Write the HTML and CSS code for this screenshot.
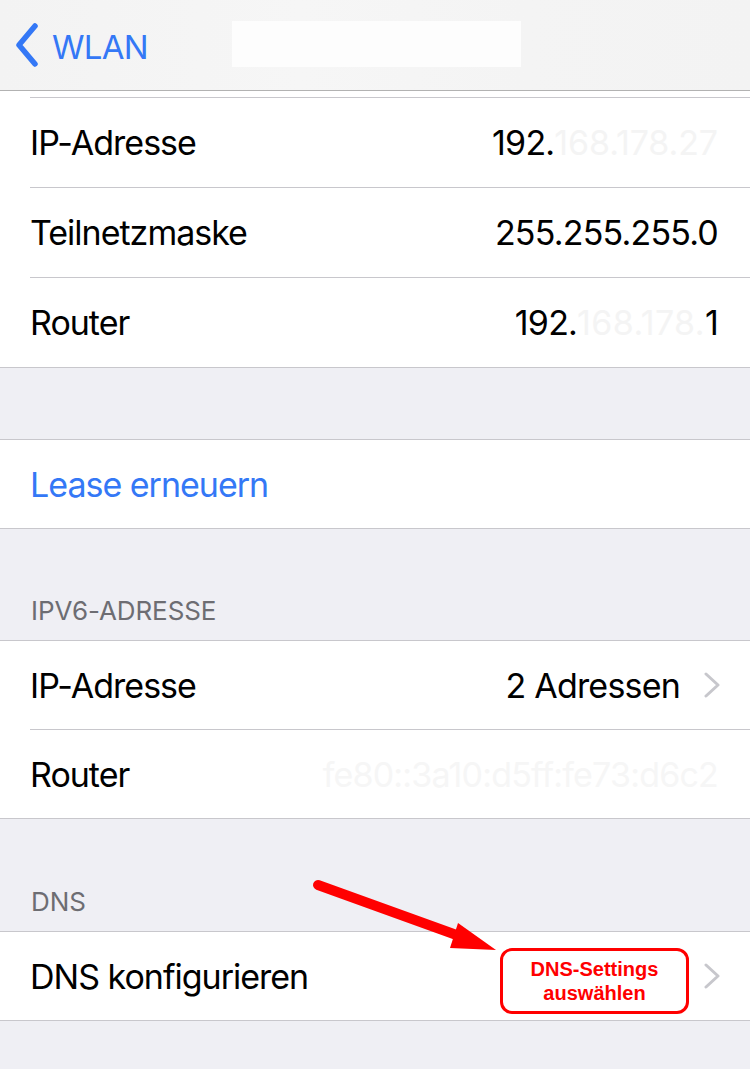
FILE: index.html
```html
<!DOCTYPE html>
<html lang="de">
<head>
<meta charset="utf-8">
<title>WLAN</title>
<link rel="stylesheet" href="styles.css">
</head>
<body>
<div class="screen">
  <header class="navbar">
    <a class="back" href="#">
      <svg class="back-chevron" width="30" height="44" viewBox="0 0 30 44">
        <path d="M25 7 L9 26 L25 45" transform="translate(0,-4)" fill="none" stroke="#3478f6" stroke-width="5.5" stroke-linecap="round" stroke-linejoin="round"/>
      </svg>
      <span>WLAN</span>
    </a>
    <div class="title-mask"></div>
  </header>

  <section class="group group-top">
    <div class="row"><div class="row-inner"><span class="label">IP-Adresse</span><span class="value">192.<span class="hidden hidden-ip">168.178.27</span></span></div></div>
    <div class="row"><div class="row-inner"><span class="label">Teilnetzmaske</span><span class="value">255.255.255.0</span></div></div>
    <div class="row"><div class="row-inner"><span class="label">Router</span><span class="value">192.<span class="hidden hidden-router">168.178.</span>1</span></div></div>
  </section>

  <div class="spacer"></div>

  <section class="group">
    <div class="row"><div class="row-inner"><span class="label link">Lease erneuern</span></div></div>
  </section>

  <div class="section-header">IPV6-ADRESSE</div>
  <section class="group">
    <div class="row"><div class="row-inner has-chevron"><span class="label">IP-Adresse</span><span class="value">2 Adressen</span>
      <svg class="chevron" width="16" height="26" viewBox="0 0 16 26"><path d="M2 2 L14 13 L2 24" fill="none" stroke="#c7c7cc" stroke-width="3" stroke-linecap="round" stroke-linejoin="round"/></svg></div></div>
    <div class="row"><div class="row-inner"><span class="label">Router</span><span class="value hidden">fe80::3a10:d5ff:fe73:d6c2</span></div></div>
  </section>

  <div class="section-header section-header-dns">DNS</div>
  <section class="group">
    <div class="row"><div class="row-inner has-chevron"><span class="label">DNS konfigurieren</span>
      <svg class="chevron" width="16" height="26" viewBox="0 0 16 26"><path d="M2 2 L14 13 L2 24" fill="none" stroke="#c7c7cc" stroke-width="3" stroke-linecap="round" stroke-linejoin="round"/></svg></div></div>
  </section>

  <!-- red callout pointing at the DNS row -->
  <svg class="callout-arrow" width="750" height="1069" viewBox="0 0 750 1069">
    <line x1="318" y1="885" x2="462" y2="937" stroke="#ff0000" stroke-width="10" stroke-linecap="round"/>
    <polygon points="458,923 496,950 450,948" fill="#ff0000"/>
  </svg>
  <div class="callout-box">DNS-Settings<br>auswählen</div>
</div>
</body>
</html>
```

FILE: styles.css
```css
html, body {
  margin: 0;
  padding: 0;
}

body {
  background: #efeff4;
  font-family: "Inter", "Roboto", sans-serif;
  color: #000;
}

.screen {
  position: relative;
  width: 750px;
  height: 1069px;
  overflow: hidden;
  background: #efeff4;
}

/* navigation bar */
.navbar {
  height: 90px;
  border-bottom: 1px solid #b2b2b2;
  background: linear-gradient(90deg, #f3f3f3 0%, #f6f6f6 40%, #f4f4f4 70%, #f3f3f3 100%);
  display: flex;
  align-items: center;
  padding-left: 10px;
  box-sizing: content-box;
}

.back {
  display: flex;
  align-items: center;
  gap: 12px;
  color: #3478f6;
  text-decoration: none;
  font-size: 33px;
  letter-spacing: -0.7px;
  padding-top: 4px;
}

.back-chevron {
  display: block;
  margin-top: -4px;
}

.title-mask {
  position: absolute;
  left: 232px;
  top: 21px;
  width: 289px;
  height: 46px;
  background: #fdfdfd;
}

/* grouped table */
.group {
  background: #fff;
  border-top: 1px solid #c8c7cc;
  border-bottom: 1px solid #c8c7cc;
}

.group-top {
  border-top: none;
  padding-top: 6px;
}

.group-top .row:first-child .row-inner {
  border-top: 1px solid #c8c7cc;
}

.row {
  padding-left: 30px;
}

.row-inner {
  height: 88px;
  display: flex;
  align-items: center;
  justify-content: space-between;
  padding-right: 32px;
  border-bottom: 1px solid #c8c7cc;
  font-size: 34px;
  letter-spacing: -1px;
}

.group-top .row-inner {
  height: 89px;
}

.row:last-child .row-inner {
  border-bottom: none;
}

.label {
  white-space: nowrap;
}

.link {
  color: #3478f6;
}

.value {
  white-space: nowrap;
  color: #000;
  letter-spacing: -0.8px;
}

.hidden {
  color: #f4f4f4;
}

.hidden-ip {
  letter-spacing: -0.1px;
}

.hidden-router {
  letter-spacing: 0.4px;
}

.value.hidden {
  color: #f6f6f6;
}

.has-chevron {
  padding-right: 30px;
}

.has-chevron .value {
  margin-left: auto;
  margin-right: 24px;
}

.chevron {
  display: block;
  margin-left: auto;
}

.has-chevron .value + .chevron {
  margin-left: 0;
}

.spacer {
  height: 71px;
}

.section-header {
  height: 111px;
  box-sizing: border-box;
  display: flex;
  align-items: flex-end;
  padding: 0 0 13px 31px;
  font-size: 26px;
  line-height: 32px;
  color: #6d6d72;
  letter-spacing: -0.1px;
}

.section-header-dns {
  height: 112px;
}

/* annotation overlay */
.callout-arrow {
  position: absolute;
  left: 0;
  top: 0;
  pointer-events: none;
}

.callout-box {
  position: absolute;
  left: 500px;
  top: 948px;
  width: 189px;
  height: 66px;
  box-sizing: border-box;
  border: 3px solid #ff0000;
  border-radius: 12px;
  background: #fff;
  color: #ff0000;
  font-family: "Liberation Sans", Arial, sans-serif;
  font-weight: bold;
  font-size: 20px;
  line-height: 24px;
  text-align: center;
  padding-top: 6px;
}
```
